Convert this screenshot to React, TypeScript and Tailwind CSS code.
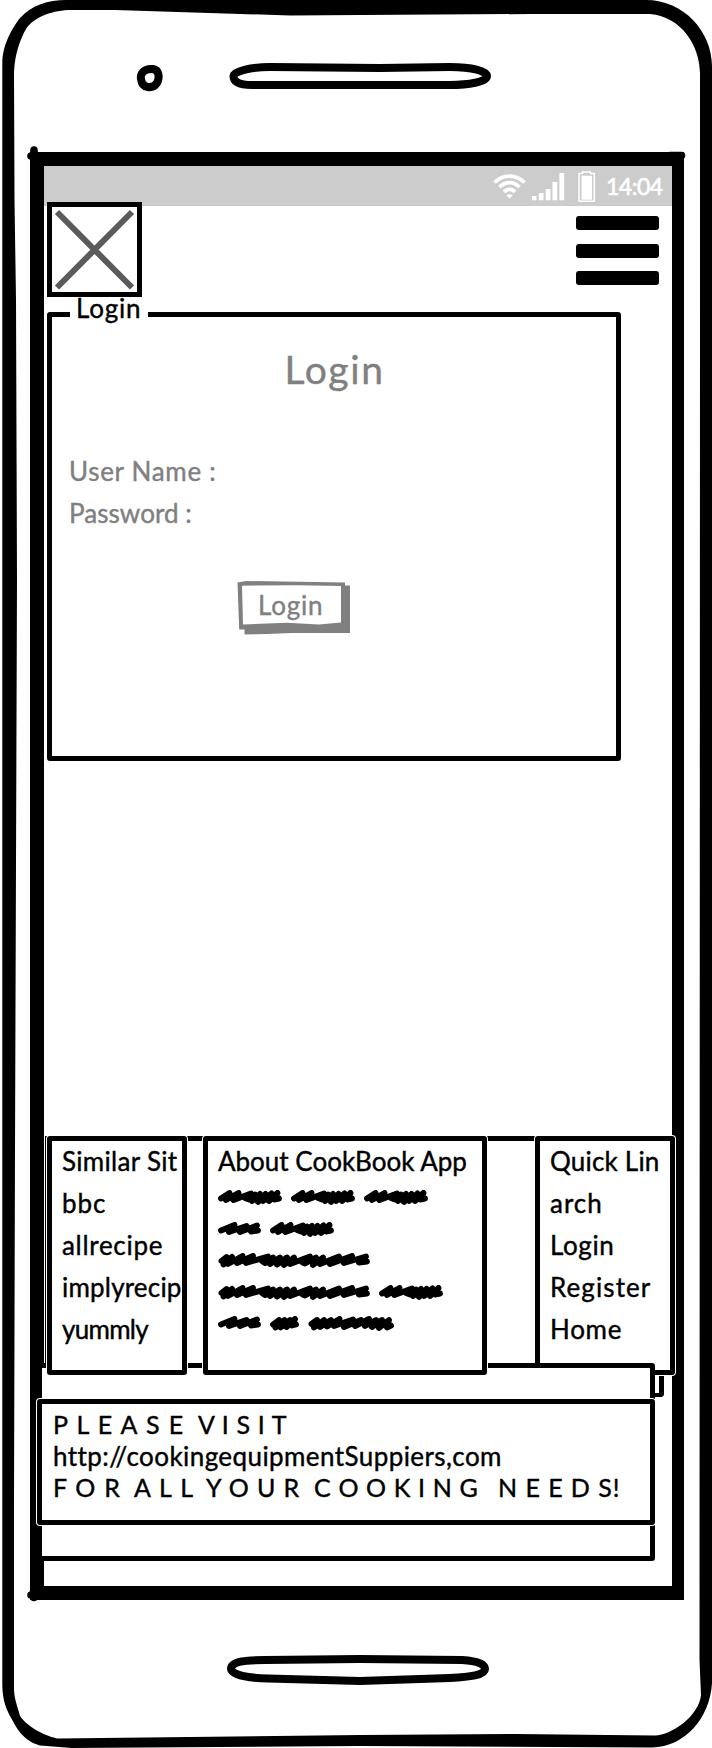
const SCRIBBLES: Record<string, { width: number; d: string }> = {
  short: { width: 29, d: 'M3 8.5L9 4L5.500 11.500L14.500 4L10.500 11.500L20 4L16.500 11L25 3L22 9.500L26 8.500' },
  medium: { width: 43, d: 'M3 8.500L16.500 3L11 10L28.500 4L22 10L39 3.500L33 9.500L40 8.500' },
  long: {
    width: 64,
    d: 'M3 8.500L11.500 3L8 10L20.500 3L15.500 10L33 3.500L27 8L31 9.500L37 4.500L34 11L42 4L40 12L47.500 4L45 11L53.500 3.500L51 11L59.500 3L56 9.500L61 8.500',
  },
  wide: {
    width: 86,
    d: 'M3.500 8L9 4L6 11.500L16 4L12 11L23 4L19 10.500L31.500 3L26 10L45 3.500L36 11L53 4L47 10L61 3L57 10L68 4L64 11L74 4L71 12L81 4L79 11.500L83 9.500',
  },
  full: {
    width: 152,
    d: 'M3.500 8L8.500 4L5.500 11.500L14 4L10 11L24.500 3L19 10L35 3L28 10L50 3.500L44 8L47 10L55 4.500L52 11L62 4.500L59 11.500L69 4.500L66 12L76 4.500L72 11L92 3.500L84 9L87 10.500L98 4.500L95 12L105 4.500L102 11L121 3.500L112 11L134 3L126 10L148 3.500L141 9.500L149 8.500',
  },
};

const SCRIBBLE_ROWS = [
  ['long', 'long', 'long'],
  ['medium', 'long'],
  ['full'],
  ['full', 'long'],
  ['medium', 'short', 'wide'],
];

function Scribble({ kind }: { kind: string }) {
  const { width, d } = SCRIBBLES[kind];
  return (
    <svg width={width} height="15" viewBox={`0 0 ${width} 15`} className="block shrink-0" fill="none">
      <path d={d} stroke="#000" strokeWidth="5.9" strokeLinecap="round" strokeLinejoin="round" />
    </svg>
  );
}

function DeviceOutline() {
  return (
    <svg className="absolute inset-0" width="712" height="1748" viewBox="0 0 712 1748">
      <path
        fillRule="evenodd"
        d="M2.3 62C3 42 14 26 20 18C32 5 48 0 66 0H646C684 0 712 32 712 66V1683C710 1718 685 1747 652 1747.5L360 1746L72 1748L40 1745.5C20 1740 14 1722 10 1716C4 1705 2 1695 2.3 1680ZM14 72C15 52 21 38 26 29C33 18 50 11 68 10L115 10L290 15.5L360 15L530 14H650C682 17 700 46 700 74V300L699.5 1660L701 1695C699 1716 672 1735 655 1735.5L515 1734L360 1735L58 1738.5C48 1737 28 1728 20 1716C18 1708 14.5 1700 14 1690V1500L15 1150L17 580L16 300L14.5 200Z"
      />
      <g fill="none" stroke="#000" strokeWidth="8">
        <path d="M153 69C143 68 140 75 141 79C142 89 153 89 157 83C160 77 159 70 153 69Z" />
        <path d="M233.5 76C234 71 252 67 270 67L380 68L450 67C472 67 487 71 487 76C487 82 468 85 450 85H252C238 85 233.5 81 233.5 76Z" />
        <path d="M231 1669C231 1661 248 1660 265 1660L360 1659L462 1660C478 1661 485 1664 485 1669C485 1675 470 1677 450 1678L360 1681L268 1678.500C248 1678 232 1675 231 1669Z" />
      </g>
      <path
        d="M34 150V165M31 156H40M34 1588V1597.500M31 1595H40M670 155.500H681.500"
        stroke="#000"
        strokeWidth="7.6"
        strokeLinecap="round"
      />
    </svg>
  );
}

function StatusIcons() {
  return (
    <svg width="113" height="40" viewBox="0 0 113 40" className="block" fill="none">
      <g stroke="#fff" strokeWidth="3.8">
        <path d="M1.500 16.500C10 8 23 8 31.500 16.500" />
        <path d="M6.500 21.200C12.500 15.200 20.500 15.200 26.500 21.200" />
        <path d="M11 26C14 22.500 19 22.500 22 26" />
      </g>
      <path d="M13.300 29.500Q16.500 26.800 19.700 29.500L16.500 32.500Z" fill="#fff" />
      <g fill="#fff">
        <rect x="39" y="30" width="4.500" height="4.300" />
        <rect x="45.800" y="27" width="4.800" height="7.300" />
        <rect x="52.700" y="23" width="4.800" height="11.300" />
        <rect x="59.500" y="16" width="4.800" height="18.300" />
        <rect x="66.400" y="7" width="4.800" height="27.300" />
        <rect x="88.500" y="9.700" width="10.500" height="24" />
      </g>
      <path d="M86 7.500H89.500V6H97.500V7.500H101.300V35.300H86Z" stroke="#fff" strokeWidth="1.500" strokeLinejoin="round" />
    </svg>
  );
}

function LoginButton() {
  return (
    <button type="button" className="relative mt-[47px] ml-[185px] block h-[54px] w-[113px] text-left">
      <svg className="absolute inset-0" width="113" height="54" viewBox="0 0 113 54">
        <path d="M0.500 1.500L9 0L108 1.500V4.500H113V52L55 52L30 53L7.500 53.500V48.500H2.200Z" fill="#808080" />
        <path d="M5 4.700L60 4.300L104 5V41.500L82 43.500L50 41.800L6 43.500Z" fill="#fff" />
      </svg>
      <span className="relative block -mt-[7px] pl-[21px] leading-[30px] tracking-[0.8px]">Login</span>
    </button>
  );
}

export default function App() {
  return (
    <div className="relative h-[1748px] w-[712px] overflow-hidden bg-white pt-[152px] pl-[30px] font-['Lato','Open_Sans',sans-serif] text-[26px] text-black [-webkit-text-stroke:0.4px]">
      <DeviceOutline />

      <main className="relative h-[1448px] w-[654px] border-[14px] border-r-[12px] border-black bg-white">
        <div className="flex h-10 justify-end bg-[#ccc] text-white">
          <StatusIcons />
          <span className="w-[66px] text-[23px] leading-10 tracking-[-0.5px] [-webkit-text-stroke:0.6px]">14:04</span>
        </div>

        <header className="relative -mt-1 ml-[3px] flex items-start justify-between pr-[13px]">
          <div className="flex h-[95px] w-[95px] items-center justify-center border-[5px] border-black bg-white">
            <svg width="85" height="85" viewBox="0 0 85 85" className="block shrink-0">
              <path d="M5 5L80 80.500M80 5L5 80.500" stroke="#5b5b5d" strokeWidth="6" />
            </svg>
          </div>
          <nav aria-label="Menu" className="flex flex-col gap-[13.500px] pt-3.5">
            <div className="h-3.5 w-[83px] rounded-[3px] bg-black" />
            <div className="h-3.5 w-[83px] rounded-[3px] bg-black" />
            <div className="h-3.5 w-[83px] rounded-[3px] bg-black" />
          </nav>
        </header>

        <section className="relative mt-[15px] ml-[3px] h-[449px] w-[574px] rounded-[3px] border-[5px] border-black text-[#808080]">
          <div className="absolute -top-[5px] left-[18px] h-[5px] w-[78px] bg-white" />
          <span className="absolute -top-6 left-6 leading-[30px] tracking-[0.8px] text-black">Login</span>
          <h1 className="mt-8 pl-px text-center text-[39px] leading-10 tracking-[1.600px]">Login</h1>
          <div className="mt-[61px] pl-[17px] leading-[42px]">
            <p className="tracking-[0.7px]">User Name :</p>
            <p className="tracking-[0.05px]">Password :</p>
          </div>
          <LoginButton />
        </section>

        <div className="mt-[375px] ml-px flex h-[227px] w-[600px] items-start border-t-[5px] border-l border-black pl-px leading-[42px] whitespace-nowrap">
          <ul className="z-20 -mt-[5px] h-[239px] w-[140px] shrink-0 rounded-[3px] border-[5px] border-black bg-white pl-2.5 shadow-[0_0_0_1px_white]">
            <li className="-mt-px tracking-[0.3px]">Similar Sit</li>
            <li className="tracking-[0.9px]">bbc</li>
            <li className="tracking-[0.7px]">allrecipe</li>
            <li className="tracking-[0.2px]">implyrecip</li>
            <li className="tracking-[-0.7px]">yummly</li>
          </ul>

          <section className="z-20 -mt-[5px] ml-4 h-[239px] w-[284px] shrink-0 rounded-[3px] border-[5px] border-black bg-white pl-2.5 shadow-[0_0_0_1px_white]">
            <h2 className="-mt-px">About CookBook App</h2>
            <div className="mt-2 flex flex-col gap-[16.600px]">
              {SCRIBBLE_ROWS.map((row, i) => (
                <div key={i} className="flex gap-[9px]">
                  {row.map((kind, j) => (
                    <Scribble key={j} kind={kind} />
                  ))}
                </div>
              ))}
            </div>
          </section>

          <ul className="z-0 -mt-[5px] ml-12 h-[239px] w-[140px] shrink-0 rounded-[3px] border-[5px] border-black bg-white pl-2.5 shadow-[0_0_0_1px_white]">
            <li className="-mt-px tracking-[0.2px]">Quick Lin</li>
            <li className="tracking-[1px]">arch</li>
            <li className="tracking-[0.6px]">Login</li>
            <li className="tracking-[1.100px]">Register</li>
            <li className="tracking-[0.7px]">Home</li>
          </ul>
        </div>

        <footer className="relative z-10 -ml-[7px] h-[198px] w-[618px] rounded-[3px] border-[5px] border-black bg-white">
          <div className="absolute top-2 -right-[14px] h-[21px] w-[10px] rounded-br-sm border-r-[5px] border-b-[4px] border-black" />
          <div className="-mx-[5px] mt-[31px] h-[126px] rounded-[3px] border-[5px] border-black bg-white pt-1 pl-[11px] text-[25px] leading-8 whitespace-pre shadow-[0_0_0_1px_white]">
            <p className="flex">
              <span className="w-[145px] tracking-[1.400px]">P L E A S E</span>
              <span className="tracking-[0.65px]">V I S I T</span>
            </p>
            <p className="text-[26px] tracking-[0.42px]">http://cookingequipmentSuppiers,com</p>
            <p className="-mt-px flex">
              <span className="w-[81px] tracking-[1.200px]">F O R</span>
              <span className="w-[72px] tracking-[1.300px]">A L L</span>
              <span className="w-[108px] tracking-[0.9px]">Y O U R</span>
              <span className="w-[184px] tracking-[0.65px]">C O O K I N G</span>
              <span className="tracking-[0.95px]">N E E D S!</span>
            </p>
          </div>
        </footer>
      </main>
    </div>
  );
}
